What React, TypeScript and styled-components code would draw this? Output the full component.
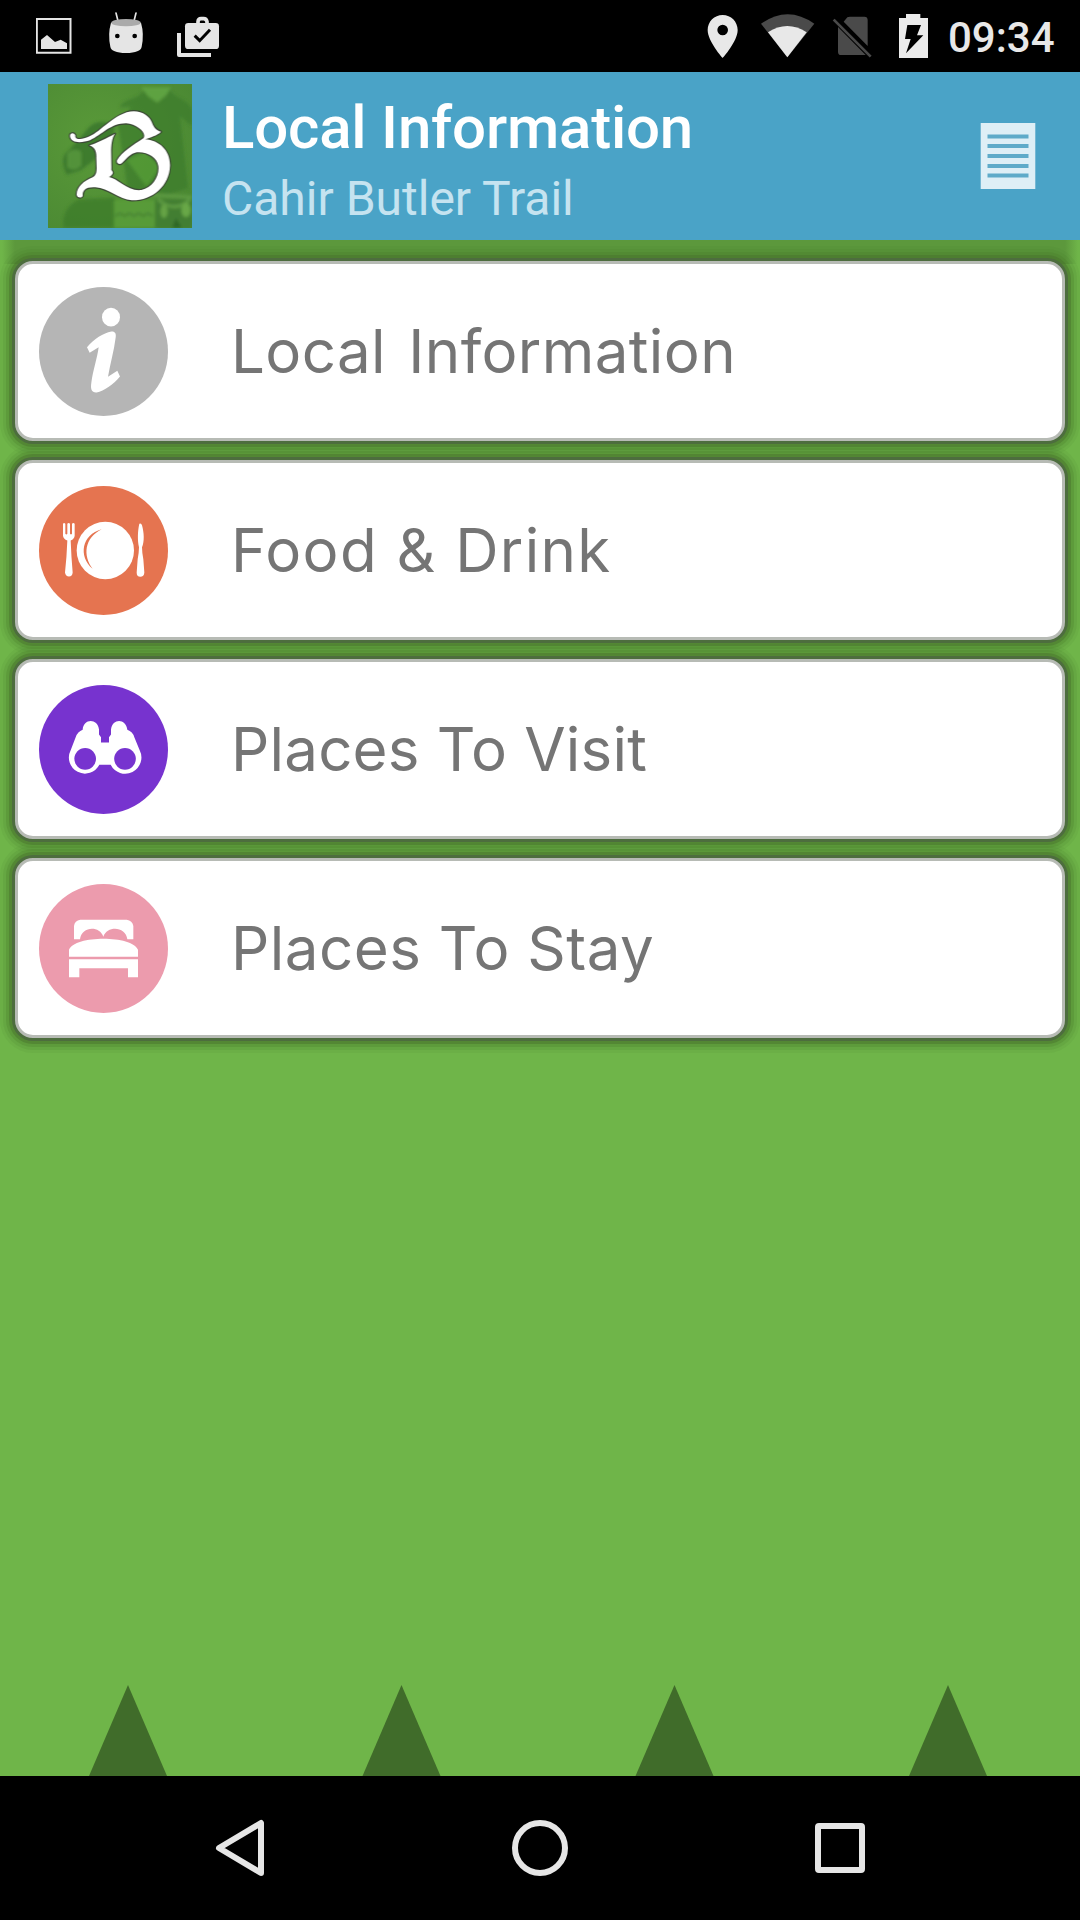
import React from "react";
import styled, { createGlobalStyle } from "styled-components";

const GlobalStyle = createGlobalStyle`
  * { box-sizing: border-box; }
  body { margin: 0; background: #000; }
  svg { display: block; flex: none; }
`;

const Screen = styled.div`
  width: 1080px;
  height: 1920px;
  display: flex;
  flex-direction: column;
  overflow: hidden;
  background: #000;
  font-family: Roboto, "Liberation Sans", sans-serif;
`;

const StatusBar = styled.header`
  height: 72px;
  flex: none;
  display: flex;
  justify-content: space-between;
  padding: 0 24px 0 36px;
`;

const StatusGroup = styled.div<{ $gap: number }>`
  display: flex;
  gap: ${(p) => p.$gap}px;
`;

const Clock = styled.time`
  width: 108px;
  margin-left: -4px;
  font-size: 42px;
  font-weight: 500;
  line-height: 75px;
  color: #e8e8e8;
  white-space: nowrap;
`;

const AppBar = styled.div`
  height: 168px;
  flex: none;
  display: flex;
  align-items: center;
  padding: 0 44px 0 48px;
  background: #4aa3c7;
`;

const Titles = styled.div`
  flex: 1;
  margin-left: 30px;
  padding-top: 7px;
  display: flex;
  flex-direction: column;
  white-space: nowrap;
`;

const Title = styled.h1`
  margin: 0;
  font-size: 60px;
  line-height: 72px;
  font-weight: 500;
  letter-spacing: -0.2px;
  color: #fff;
`;

const Subtitle = styled.div`
  font-size: 48px;
  line-height: 56px;
  margin-top: 7px;
  color: #c5e3f0;
`;

const MenuButton = styled.button`
  display: flex;
  padding: 0 0 4px;
  border: 0;
  background: none;
`;

const Content = styled.main`
  flex: 1;
  display: flex;
  flex-direction: column;
  justify-content: space-between;
  background: #6fb549;
  overflow: hidden;
`;

const List = styled.nav`
  display: flex;
  flex-direction: column;
  gap: 19px;
  padding: 21px 15px 0;
  background: linear-gradient(90deg, transparent 2px, #5c983c 15px, #5c983c calc(100% - 15px), transparent calc(100% - 2px))
    0 0 / 100% 24px no-repeat;
`;

const Card = styled.a`
  height: 180px;
  display: flex;
  align-items: center;
  padding-left: 21px;
  border: 3px solid #b7bbb5;
  border-radius: 18px;
  background: #fff;
  box-shadow:
    0 0 0 3px #4d6d3e,
    0 0 0 6px rgba(70, 110, 45, 0.45),
    0 0 0 9px rgba(70, 120, 40, 0.25),
    0 0 0 12px rgba(70, 120, 40, 0.14),
    0 0 0 15px rgba(70, 120, 40, 0.09);
`;

const Label = styled.span<{ $tracking: number; $wordGap: number }>`
  margin-left: 63px;
  font-family: Inter, "Liberation Sans", sans-serif;
  font-size: 60px;
  line-height: 72px;
  letter-spacing: ${(p) => p.$tracking}px;
  word-spacing: ${(p) => p.$wordGap}px;
  color: #757575;
  white-space: nowrap;
`;

const NavBar = styled.footer`
  height: 144px;
  flex: none;
  display: flex;
  justify-content: center;
  align-items: center;
  gap: 240px;
`;

const Glyph = ({ w, h = 72, box, children }: { w: number; h?: number; box: string; children: React.ReactNode }) => (
  <svg width={w} height={h} viewBox={box} aria-hidden="true">{children}</svg>
);

const Logo = () => (
  <Glyph w={144} h={144} box="54 42 432 432">
    <defs>
      <radialGradient id="moss" cx="0.35" cy="0.4" r="0.8">
        <stop offset="0" stopColor="#5a9a39" />
        <stop offset="1" stopColor="#4a8833" />
      </radialGradient>
      <filter id="soft"><feGaussianBlur stdDeviation="5" /></filter>
    </defs>
    <rect x="54" y="42" width="432" height="432" fill="url(#moss)" />
    <g filter="url(#soft)">
      <path d="M268 112C290 78 330 92 346 52h76c-4 30 48 30 64 66v50l-36-30 24 216-60 20-120-10-30-200 40-54z" fill="#3c7a2c" opacity=".65" />
      <path d="M334 52h90l-16 24-26 22-28-20z" fill="#69ae49" opacity=".75" />
      <path d="M170 180c20-30 60-30 84-10l-10 60-90 70-44 14c-16-30-16-60 10-76z" fill="#34702a" opacity=".7" />
      <path d="M112 250q20-20 42-4v42q-24 18-42 4z" fill="#5c9c42" opacity=".7" />
      <path d="M100 474q-6-60 46-86l110-6v92z" fill="#397629" opacity=".6" />
      <path d="M252 390h122v84H252z" fill="#599e3b" opacity=".85" />
      <path d="M376 388h110v86H376z" fill="#427e31" />
      <path d="M384 388q50 44 96 0M250 366l236 16" fill="none" stroke="#5d9a43" strokeWidth="10" />
      <ellipse cx="402" cy="424" rx="11" ry="20" fill="#65a344" />
      <ellipse cx="468" cy="420" rx="14" ry="22" fill="#68a746" />
      <path d="M426 474l12-30 18 30z" fill="#2f6728" />
      <path d="M256 438l14-8 14 8 14-8 14 8 14-8 14 8 14-8 14 8" fill="none" stroke="#478331" strokeWidth="6" />
      <path d="M290 270l60 80 40-60-46-44z" fill="#59a137" opacity=".7" />
    </g>
    <path d="M120 199C119 188 132 187 136 196C133 208 150 209 162 205C205 196 230 149 290 127C328 116 358 136 366 158C371 173 380 181 393 185C382 197 360 202 345 208C388 211 421 242 420 287C418 347 368 392 305 391C267 388 236 355 196 352C166 350 157 362 158 378C154 385 142 384 140 375C139 353 160 333 188 322C205 312 199 289 199 263C200 244 194 232 178 226C202 219 230 204 255 191C238 215 245 261 244 300C252 308 249 314 237 321C263 325 293 365 334 360C368 353 389 318 385 288C381 261 350 244 320 247C301 251 291 265 276 279C270 286 258 281 261 271C275 246 309 225 341 204C350 188 322 163 288 160C242 160 216 194 180 211C158 218 123 222 120 199Z" fill="#fff" stroke="#3c4936" strokeWidth="7" paintOrder="stroke" strokeLinejoin="round" />
  </Glyph>
);

const InfoIcon = () => (
  <Glyph w={129} h={129} box="117 169.5 387 387">
    <circle cx="310.5" cy="363" r="193.5" fill="#b5b5b5" />
    <ellipse cx="333" cy="260" rx="27" ry="28" fill="#fff" />
    <path d="M261 350C282 326 310 307 334 303C345 302 349 309 347 321C342 362 331 397 324 439L352 421L360 438C342 460 312 482 290 486C275 487 271 477 274 457C279 418 292 382 296 350L269 367Z" fill="#fff" />
  </Glyph>
);

const FoodIcon = () => (
  <Glyph w={129} h={129} box="117 106.5 387 387">
    <circle cx="310.5" cy="300" r="193.5" fill="#e57450" />
    <circle cx="316" cy="300" r="86" fill="#fff" />
    <path d="M305 236C245 252 234 317 278 355C248 315 253 262 305 236Z" fill="#e57450" />
    <path d="M189 220q3-5 7 0v30q3 4 6 0v-30q4-5 8 0v30q3 4 6 0v-30q4-5 8 0v36q-1 10-12 14q2 52 6 96q-1 12-11 12t-12-12q5-44 7-96q-12-4-13-14z" fill="#fff" />
    <path d="M418 220q5-4 8 4c6 22 8 48 0 66q0 14 4 36l3 40q-1 13-12 13t-11-13l3-40q4-22 4-36c-5-20-4-48 1-70z" fill="#fff" />
  </Glyph>
);

const BinocularsIcon = () => (
  <Glyph w={129} h={129} box="57 43.5 387 387">
    <circle cx="250.5" cy="237" r="193.5" fill="#7733cf" />
    <path d="M188 178C190 143 233 143 237 177V192L243 200V216H267V200L273 192V177C277 143 318 143 322 178Q338 184 343 200L359 239A48 48 0 1 1 272 283H238A48 48 0 1 1 152 239L167 200Q173 184 188 178Z" fill="#fff" />
    <circle cx="195.5" cy="265" r="32.5" fill="#7733cf" />
    <circle cx="315" cy="265" r="32.5" fill="#7733cf" />
  </Glyph>
);

const BedIcon = () => (
  <Glyph w={129} h={129} box="57 71 387 387">
    <circle cx="250.5" cy="264.5" r="193.5" fill="#ec9bad" />
    <path d="M162 237V197Q164 180 181 178H320Q337 180 340 197V237H322C318 198 262 194 250 229C238 194 184 198 180 237Z" fill="#fff" />
    <path d="M147 289V268C164 224 337 224 354 268V289ZM147 297H354V351H324V324H178V351H147Z" fill="#fff" />
  </Glyph>
);

const items = [
  { label: "Local Information", Icon: InfoIcon, tracking: 0.4, wordGap: 5 },
  { label: "Food & Drink", Icon: FoodIcon, tracking: 1.3, wordGap: 0.5 },
  { label: "Places To Visit", Icon: BinocularsIcon, tracking: 0.2, wordGap: 0 },
  { label: "Places To Stay", Icon: BedIcon, tracking: 0.5, wordGap: 0 },
];

const peaks = [128, 401.5, 674.5, 948];

export default function App() {
  return (
    <Screen>
      <GlobalStyle />
      <StatusBar>
        <StatusGroup $gap={30}>
          <Glyph w={40} box="108 0 120 216">
            <path d="M110.5 57h101v101h-101z" fill="none" stroke="#e5e5e5" strokeWidth="6" />
            <path d="M123 147v-28l18-14 24 21 17-7 19 11v17z" fill="#e5e5e5" />
          </Glyph>
          <Glyph w={40} box="318 0 120 216">
            <path d="M348 39l6 24M408 39l-6 24" stroke="#e5e5e5" strokeWidth="5" strokeLinecap="round" />
            <path d="M333 68q-10 34-2 72q3 18 47 19q44-1 47-19q8-38-2-72z" fill="#e5e5e5" />
            <ellipse cx="378" cy="68" rx="44" ry="11" fill="#aaa" />
            <circle cx="352" cy="108" r="7" fill="#000" />
            <circle cx="404" cy="108" r="7" fill="#000" />
          </Glyph>
          <Glyph w={44} box="528 0 132 216">
            <path d="M537 99v66h96" fill="none" stroke="#e5e5e5" strokeWidth="12" strokeLinejoin="round" />
            <path d="M594 74V65q1-9 9-9h8q8 0 10 9v9" fill="none" stroke="#e5e5e5" strokeWidth="11" />
            <rect x="555" y="69" width="102" height="78" rx="10" fill="#e5e5e5" />
            <path d="M584 107l15 15 31-33" fill="none" stroke="#000" strokeWidth="9" />
          </Glyph>
        </StatusGroup>
        <StatusGroup $gap={16}>
          <Glyph w={40} box="72 0 120 216">
            <path fillRule="evenodd" d="M128 45C103 45 83 65 83 90C83 124 128 174 128 174S173 124 173 90C173 65 153 45 128 45ZM128 74a16 16 0 1 1 0 32a16 16 0 1 1 0-32Z" fill="#e8e8e8" />
          </Glyph>
          <Glyph w={56} box="240 0 168 216">
            <path d="M243 71Q323 14 403 71L322 172Z" fill="#4a4a4a" />
            <path d="M264 97Q322 59 380 97L322 172Z" fill="#e8e8e8" />
          </Glyph>
          <Glyph w={42} box="456 0 126 216">
            <path d="M491 65l11-13q3-2 8-2h43q10 0 10 10v78zM474 81l83 84h-74q-9 0-9-10z" fill="#4a4a4a" />
            <path d="M461 59l111 111" stroke="#4a4a4a" strokeWidth="8" />
          </Glyph>
          <Glyph w={46} box="630 0 138 216">
            <path d="M657 54h21v-12h43v12h23v120h-87z" fill="#ebebeb" />
            <path d="M682 75h41l-12 31h19l-52 54 14-43h-17z" fill="#000" />
          </Glyph>
          <Clock>09:34</Clock>
        </StatusGroup>
      </StatusBar>
      <AppBar>
        <Logo />
        <Titles>
          <Title>Local Information</Title>
          <Subtitle>Cahir Butler Trail</Subtitle>
        </Titles>
        <MenuButton aria-label="Menu">
          <Glyph w={56} box="0 0 56 72">
            <rect x=".7" y="5" width="54.6" height="66" fill="#deeff6" />
            <path d="M7.5 18.5h41M7.5 28h41M7.5 38h41M7.5 48h41M7.5 57.5h41" stroke="#5fabc9" strokeWidth="4" />
          </Glyph>
        </MenuButton>
      </AppBar>
      <Content>
        <List>
          {items.map(({ label, Icon, tracking, wordGap }) => (
            <Card key={label}>
              <Icon />
              <Label $tracking={tracking} $wordGap={wordGap}>{label}</Label>
            </Card>
          ))}
        </List>
        <Glyph w={1080} h={91} box="0 0 1080 91">
          {peaks.map((x) => (
            <path key={x} d={`M${x} 0l39 91h-78z`} fill="#406c2a" />
          ))}
        </Glyph>
      </Content>
      <NavBar>
        <Glyph w={60} h={60} box="0 0 60 60">
          <path d="M9 30L51 5V55Z" fill="none" stroke="#e6e6e6" strokeWidth="6" strokeLinejoin="round" />
        </Glyph>
        <Glyph w={60} h={60} box="0 0 60 60">
          <circle cx="30" cy="30" r="25" fill="none" stroke="#e6e6e6" strokeWidth="6" />
        </Glyph>
        <Glyph w={60} h={60} box="0 0 60 60">
          <rect x="8" y="8" width="44" height="44" rx="1" fill="none" stroke="#e6e6e6" strokeWidth="6" strokeLinejoin="round" />
        </Glyph>
      </NavBar>
    </Screen>
  );
}
